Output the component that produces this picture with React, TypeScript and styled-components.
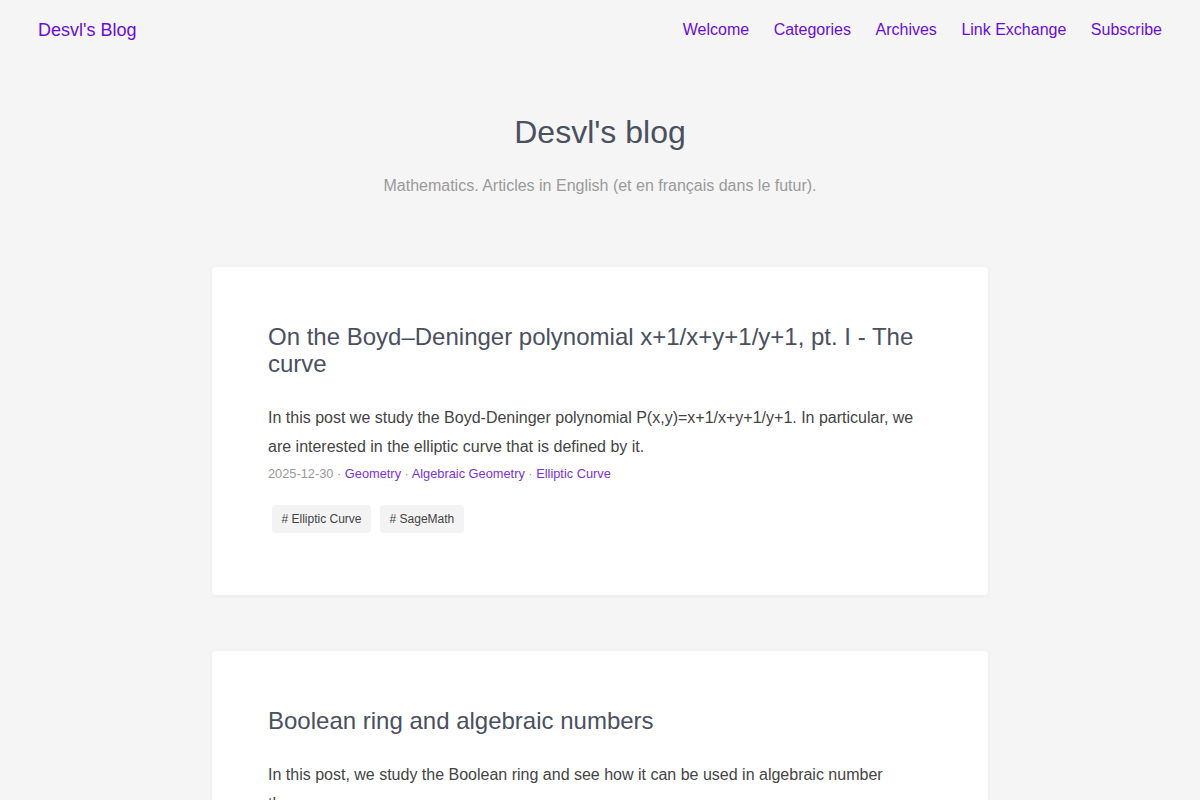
import * as React from 'react';
import styled, { createGlobalStyle } from 'styled-components';

interface Post {
  title: string;
  summary: string;
  date?: string;
  categories?: string[];
  tags?: string[];
}

const posts: Post[] = [
  {
    title: 'On the Boyd–Deninger polynomial x+1/x+y+1/y+1, pt. I - The curve',
    summary:
      'In this post we study the Boyd-Deninger polynomial P(x,y)=x+1/x+y+1/y+1. In particular, we are interested in the elliptic curve that is defined by it.',
    date: '2025-12-30',
    categories: ['Geometry', 'Algebraic Geometry', 'Elliptic Curve'],
    tags: ['Elliptic Curve', 'SageMath'],
  },
  {
    title: 'Boolean ring and algebraic numbers',
    summary:
      'In this post, we study the Boolean ring and see how it can be used in algebraic number theory.',
    date: '2025-11-02',
    categories: ['Algebra'],
    tags: ['Boolean Ring'],
  },
];

const navItems = ['Welcome', 'Categories', 'Archives', 'Link Exchange', 'Subscribe'];

const GlobalStyle = createGlobalStyle`
  html, body {
    margin: 0;
    padding: 0;
    background: #f5f5f5;
    font-family: "Liberation Sans", Arial, sans-serif;
  }
  a {
    text-decoration: none;
  }
`;

const Header = styled.header`
  display: flex;
  align-items: center;
  justify-content: space-between;
  height: 60px;
  padding: 0 38px;
`;

const Logo = styled.a`
  font-size: 18px;
  color: #6a0dd8;
`;

const Nav = styled.nav`
  display: flex;
  gap: 24.5px;
`;

const NavLink = styled.a`
  font-size: 16px;
  color: #6a0dd8;
`;

const Hero = styled.section`
  display: flex;
  flex-direction: column;
  align-items: center;
  padding-top: 52px;
`;

const HeroTitle = styled.h1`
  margin: 0;
  font-size: 32px;
  font-weight: normal;
  line-height: 40px;
  color: #4a5060;
`;

const HeroSubtitle = styled.p`
  margin: 24px 0 0;
  font-size: 16px;
  line-height: 20px;
  color: #9a9a9a;
`;

const Main = styled.main`
  display: flex;
  flex-direction: column;
  gap: 56px;
  width: 776px;
  margin: 71px auto 0;
`;

const Card = styled.article`
  background: #fff;
  border-radius: 4px;
  box-shadow: 0 1px 6px rgba(0, 0, 0, 0.05);
  padding: 56px 56px 62px;
`;

const PostTitle = styled.h2`
  margin: 0;
  font-size: 24px;
  font-weight: normal;
  line-height: 27px;
  color: #4a5060;
`;

const Summary = styled.p`
  margin: 26px 0 0;
  font-size: 16px;
  line-height: 29px;
  color: #444;
`;

const Meta = styled.div`
  margin-top: 3px;
  font-size: 12.8px;
  line-height: 20px;
  color: #999;
`;

const CategoryLink = styled.a`
  color: #7a33d6;
`;

const TagList = styled.div`
  display: flex;
  gap: 9px;
  margin-top: 21px;
  padding-left: 4px;
`;

const Tag = styled.a`
  display: inline-flex;
  align-items: center;
  height: 28px;
  padding: 0 9.5px;
  border-radius: 4px;
  background: #f3f3f3;
  font-size: 12px;
  color: #444;
`;

const PostCard: React.FC<{ post: Post }> = ({ post }) => (
  <Card>
    <PostTitle>{post.title}</PostTitle>
    <Summary>{post.summary}</Summary>
    <Meta>
      {post.date}
      {post.categories?.map((c) => (
        <React.Fragment key={c}>
          {' · '}
          <CategoryLink href="#">{c}</CategoryLink>
        </React.Fragment>
      ))}
    </Meta>
    <TagList>
      {post.tags?.map((t) => (
        <Tag key={t} href="#"># {t}</Tag>
      ))}
    </TagList>
  </Card>
);

export default function App() {
  return (
    <>
      <GlobalStyle />
      <Header>
        <Logo href="#">Desvl's Blog</Logo>
        <Nav>
          {navItems.map((n) => (
            <NavLink key={n} href="#">{n}</NavLink>
          ))}
        </Nav>
      </Header>
      <Hero>
        <HeroTitle>Desvl's blog</HeroTitle>
        <HeroSubtitle>Mathematics. Articles in English (et en français dans le futur).</HeroSubtitle>
      </Hero>
      <Main>
        {posts.map((p) => (
          <PostCard key={p.title} post={p} />
        ))}
      </Main>
    </>
  );
}
